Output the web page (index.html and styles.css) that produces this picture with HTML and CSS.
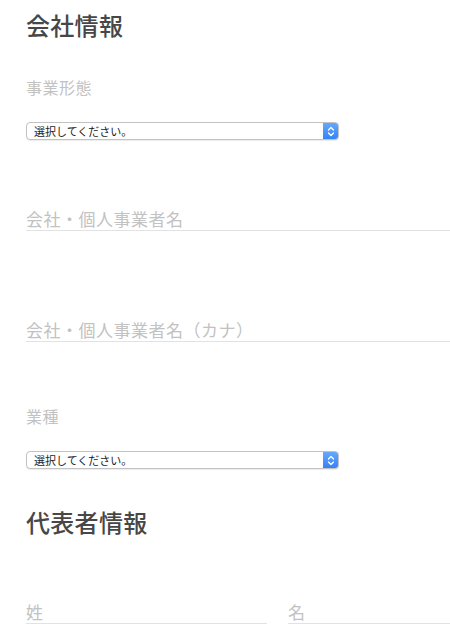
FILE: index.html
```html
<!DOCTYPE html>
<html>
<head>
	<meta charset="utf-8"/>
	<title>会社情報</title>
	<meta name="viewport" content="width=device-width,initial-scale=1">
	<link rel="stylesheet" href="styles.css">
</head>
<body>
	<div class="form">
		<h2 class="title">会社情報</h2>
		<label class="label">事業形態</label>
		<div class="select">
			<select name="type">
				<option>選択してください。</option>
			</select>
			<span class="select-btn">
				<svg width="8" height="11" viewBox="0 0 8 11"><path d="M1.5 4 L4 1.5 L6.5 4 M1.5 7 L4 9.5 L6.5 7" fill="none" stroke="#fff" stroke-width="1.3" stroke-linecap="round" stroke-linejoin="round"/></svg>
			</span>
		</div>
		<input class="text first" type="text" name="company" placeholder="会社・個人事業者名">
		<input class="text kana" type="text" name="company_kana" placeholder="会社・個人事業者名（カナ）">
		<label class="label second">業種</label>
		<div class="select">
			<select name="industry">
				<option>選択してください。</option>
			</select>
			<span class="select-btn">
				<svg width="8" height="11" viewBox="0 0 8 11"><path d="M1.5 4 L4 1.5 L6.5 4 M1.5 7 L4 9.5 L6.5 7" fill="none" stroke="#fff" stroke-width="1.3" stroke-linecap="round" stroke-linejoin="round"/></svg>
			</span>
		</div>
		<h2 class="title rep">代表者情報</h2>
		<div class="name">
			<input class="text" type="text" name="last_name" placeholder="姓">
			<input class="text" type="text" name="first_name" placeholder="名">
		</div>
	</div>
</body>
</html>
```

FILE: styles.css
```css
html, body{overflow: hidden;}
body{margin: 0; background: #fff; font-family: "Noto Sans CJK JP", "Liberation Sans", sans-serif;}
.form{padding: 13px 0 0 26px; display: flex; flex-direction: column; align-items: stretch;}

.title{margin: 0; font-size: 24px; line-height: 24px; font-weight: 500; color: #474747; letter-spacing: 0.3px;}
.title.rep{margin-top: 41px;}

.label{display: block; margin-top: 42px; font-size: 16px; line-height: 16px; color: #c2c2c2; letter-spacing: 0.5px;}
.label.second{margin-top: 66px;}

.select{
	display: flex; margin-top: 27px; width: 311px; height: 16px;
	border: 1px solid #c2c2c2; border-radius: 4px; background: #fff;
	box-shadow: 0 1px 1px rgba(0,0,0,0.08); overflow: hidden;
}
.select select{
	flex: 1; appearance: none; -webkit-appearance: none; border: none; outline: none;
	background: transparent; padding: 0 0 0 7px; margin: 0; height: 16px;
	font-family: "Noto Sans CJK JP", sans-serif; font-size: 11px; color: #222;
}
.select-btn{
	width: 15px; display: flex; align-items: center; justify-content: center;
	background: linear-gradient(#66a9fb, #3582f6);
}

.text{
	display: block; box-sizing: border-box; width: 100%; min-width: 0; height: 25px; margin: 0; padding: 0;
	border: none; border-bottom: 1px solid #e2e2e2; outline: none; background: transparent;
	font-family: "Noto Sans CJK JP", sans-serif; font-size: 17px; letter-spacing: 0.5px; color: #333;
}
.text::placeholder{color: #c2c2c2;}
.text.first{margin-top: 66px;}
.text.kana{margin-top: 86px;}

.name{display: grid; grid-template-columns: 241px 1fr; column-gap: 21px; margin-top: 65px;}
```
